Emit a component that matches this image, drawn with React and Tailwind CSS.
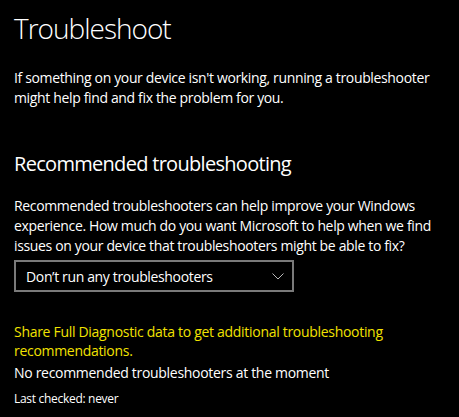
export default function App() {
  return (
    <div
      className="min-h-[417px] w-[459px] bg-black px-[14px] pt-[8px] text-white"
      style={{ fontFamily: '"Open Sans", "Noto Sans", sans-serif' }}
    >
      {/* Page title */}
      <h1 className="text-[28px] font-light leading-[40px] tracking-[-1px]">Troubleshoot</h1>

      <p className="mt-[20px] text-[14px] leading-[20px] tracking-[-0.35px]">
        If something on your device isn't working, running a troubleshooter might help find and fix the problem for you.
      </p>

      {/* Recommended section */}
      <h2 className="mt-[42px] text-[20px] leading-[28px] tracking-[-0.7px]">Recommended troubleshooting</h2>

      <p className="mt-[18px] w-[432px] text-[14px] leading-[20px] tracking-[-0.35px]">
        Recommended troubleshooters can help improve your Windows experience. How much do you want Microsoft to help when we find issues on your device that troubleshooters might be able to fix?
      </p>

      <button
        type="button"
        className="mt-[4px] flex h-[32px] w-[280px] items-center justify-between border-2 border-[#7a7a7a] pl-[10px] pr-[8px] text-[14px] tracking-[-0.35px]"
      >
        <span>Don’t run any troubleshooters</span>
        <svg width="12" height="7" viewBox="0 0 12 7" fill="none" aria-hidden="true">
          <polyline points="0.5,0.5 6,6 11.5,0.5" stroke="#b8b8b8" strokeWidth="1" />
        </svg>
      </button>

      <p className="mt-[30px] text-[14px] leading-[19px] tracking-[-0.3px] text-[#f2e200]">
        Share Full Diagnostic data to get additional troubleshooting recommendations.
      </p>

      <p className="mt-[3px] text-[14px] leading-[20px] tracking-[-0.3px]">No recommended troubleshooters at the moment</p>

      <p className="mt-[8px] text-[12px] leading-[16px] tracking-[-0.3px]">Last checked: never</p>
    </div>
  );
}
